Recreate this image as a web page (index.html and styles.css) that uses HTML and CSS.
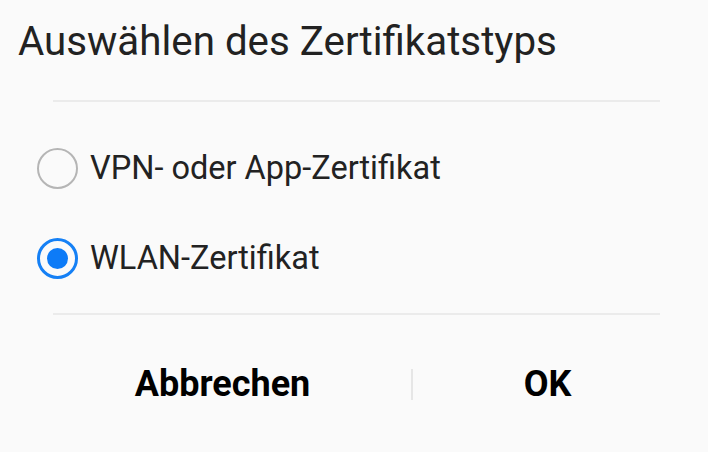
FILE: index.html
```html
<!DOCTYPE html>
<html lang="de">
<head>
    <meta charset="UTF-8">
    <meta name="viewport" content="width=device-width, initial-scale=1.0">
    <title>Zertifikatstyp</title>
    <link rel="stylesheet" href="styles.css">
</head>
<body>
    <div class="dialog">
        <h1 class="dialog-title">Auswählen des Zertifikatstyps</h1>
        <div class="divider"></div>
        <ul class="option-list">
            <li class="option">
                <span class="radio"></span>
                <span class="option-label">VPN- oder App-Zertifikat</span>
            </li>
            <li class="option">
                <span class="radio checked"></span>
                <span class="option-label">WLAN-Zertifikat</span>
            </li>
        </ul>
        <div class="divider"></div>
        <div class="button-row">
            <button class="btn btn-cancel">Abbrechen</button>
            <span class="btn-sep"></span>
            <button class="btn btn-ok">OK</button>
        </div>
    </div>
</body>
</html>
```

FILE: styles.css
```css
body {
    font-family: Roboto, "Liberation Sans", Arial, sans-serif;
    background: #fafafa;
    margin: 0;
    padding: 0;
    color: #222;
}
.dialog {
    width: 708px;
    height: 452px;
    overflow: hidden;
}
.dialog-title {
    margin: 0;
    padding: 18px 0 0 18px;
    font-size: 40.3px;
    font-weight: 400;
    line-height: 48px;
    color: #222;
}
.divider {
    height: 2px;
    background: #ebebeb;
    margin: 34px 48px 0 53px;
}
.option-list {
    list-style-type: none;
    margin: 0;
    padding: 21px 0 10px 0;
}
.option-list + .divider {
    margin-top: 0;
}
.option {
    display: flex;
    align-items: center;
    height: 90px;
    padding-left: 37px;
}
.radio {
    box-sizing: border-box;
    width: 41px;
    height: 41px;
    border: 2px solid #b5b5b5;
    border-radius: 50%;
    display: flex;
    align-items: center;
    justify-content: center;
    flex-shrink: 0;
}
.radio.checked {
    border: 3px solid #1580f5;
}
.radio.checked::after {
    content: "";
    width: 21px;
    height: 21px;
    border-radius: 50%;
    background: #0d7bf7;
}
.option-label {
    margin-left: 12px;
    font-size: 32.5px;
    color: #222;
}
.button-row {
    display: flex;
    align-items: center;
    margin-top: 49px;
    padding-left: 34px;
}
.btn {
    font-family: Roboto, "Liberation Sans", Arial, sans-serif;
    font-size: 36px;
    font-weight: 700;
    line-height: 40px;
    color: #000;
    background: none;
    border: none;
    padding: 0;
    cursor: pointer;
}
.btn-cancel { width: 377px; }
.btn-ok { width: 269px; }
.btn-sep {
    width: 2px;
    height: 31px;
    background: #e6e6e6;
}
```
